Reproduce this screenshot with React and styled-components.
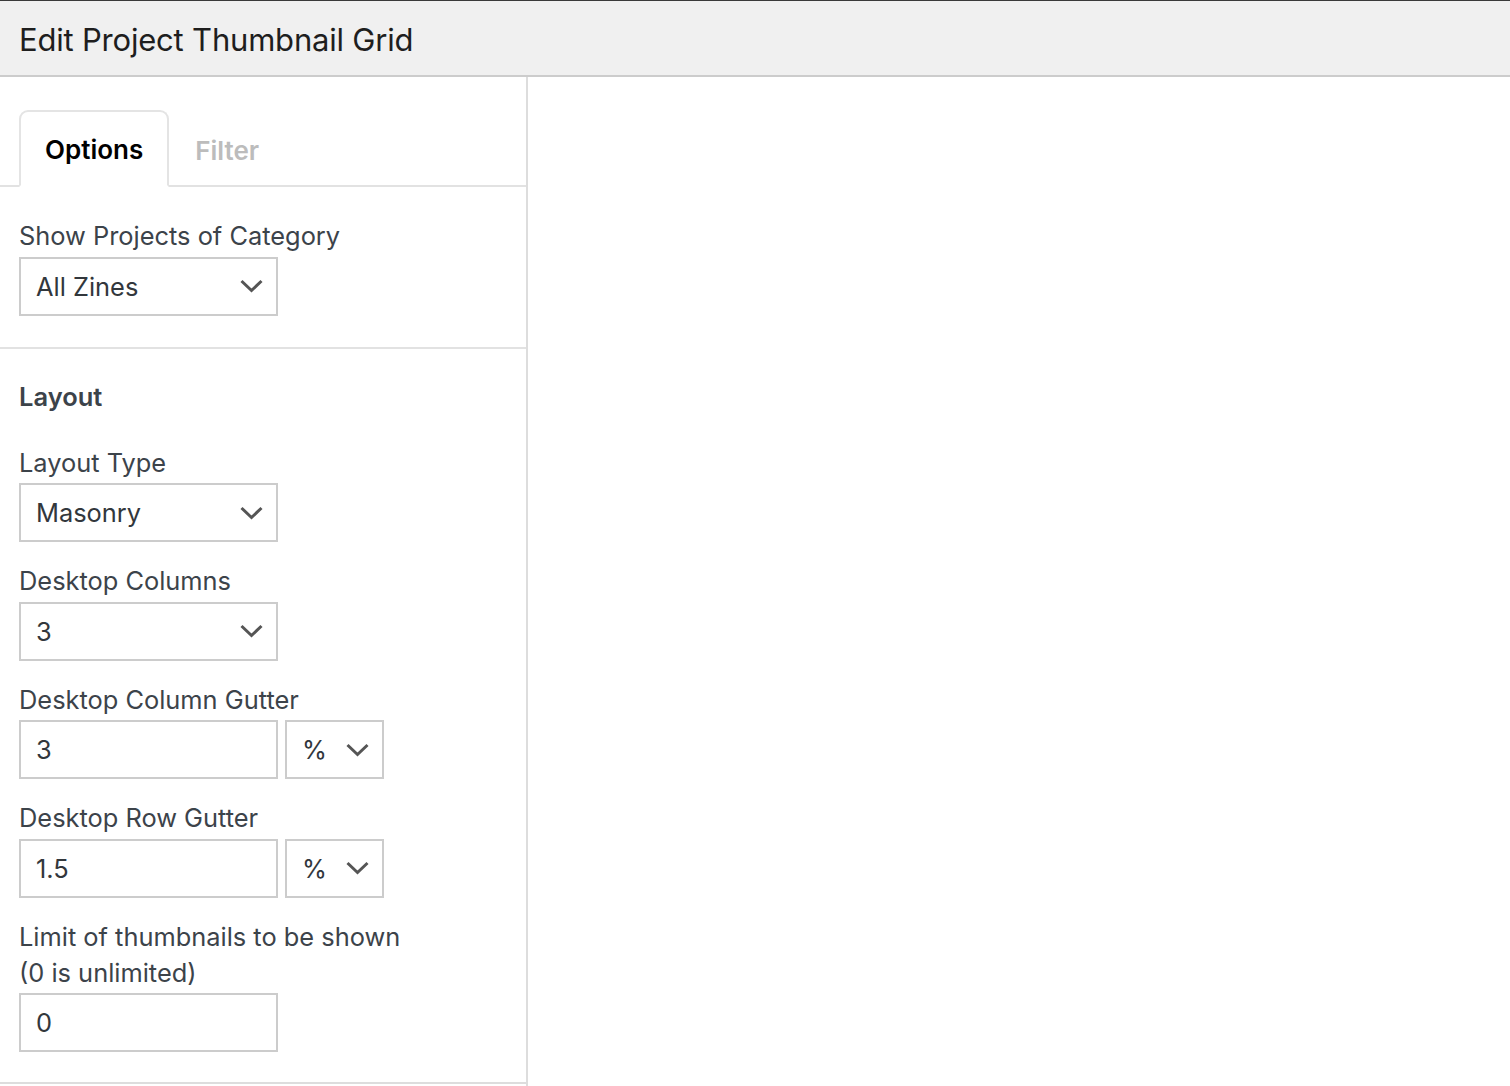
import React from "react";
import styled, { createGlobalStyle } from "styled-components";

const Global = createGlobalStyle`
  html, body { margin: 0; padding: 0; background: #fff; }
  body { font-family: Inter, "Noto Sans", sans-serif; -webkit-font-smoothing: antialiased; }
  * { box-sizing: border-box; }
`;

const Page = styled.div`
  width: 1510px;
  height: 1086px;
  display: flex;
  flex-direction: column;
  overflow: hidden;
`;

const Header = styled.header`
  height: 77px;
  flex: none;
  background: #f0f0f0;
  border-top: 1px solid #3a3a3a;
  border-bottom: 2px solid #cccccc;
  display: flex;
  align-items: center;
  padding: 2px 19px 0;
`;

const Title = styled.h1`
  margin: 0;
  font-size: 31px;
  font-weight: 400;
  color: #1e1e1e;
  letter-spacing: -0.2px;
`;

const Body = styled.div`
  flex: 1;
  display: flex;
  align-items: stretch;
`;

const Sidebar = styled.aside`
  width: 528px;
  flex: none;
  border-right: 2px solid #dddddd;
  background: #fff;
`;

const Tabs = styled.div`
  display: flex;
  padding: 33px 19px 0;
  border-bottom: 2px solid #e2e2e2;
`;

const Tab = styled.div`
  height: 77px;
  margin-bottom: -2px;
  padding: 2px 24px 0;
  display: flex;
  align-items: center;
  font-size: 26px;
  font-weight: 600;
  color: ${(p) => (p.$active ? "#000" : "#bcbcbc")};
  background: ${(p) => (p.$active ? "#fff" : "transparent")};
  border: ${(p) => (p.$active ? "2px solid #e4e4e4" : "2px solid transparent")};
  border-bottom: ${(p) => (p.$active ? "2px solid #fff" : "none")};
  border-radius: 9px 9px 0 0;
`;

const Section = styled.section`
  padding: ${(p) => p.$pad || "31px 19px 31px"};
  border-bottom: 2px solid ${(p) => (p.$last ? "#dddddd" : "#e2e2e2")};
  display: flex;
  flex-direction: column;
  gap: 21px;
`;

const Heading = styled.h2`
  margin: 0 0 9px;
  font-size: 25.5px;
  line-height: 36px;
  font-weight: 600;
  color: #3c434a;
`;

const Field = styled.div`
  display: flex;
  flex-direction: column;
  gap: 2.5px;
`;

const Label = styled.label`
  font-size: 25.4px;
  line-height: 36px;
  color: #3c434a;
  max-width: 410px;
`;

const Row = styled.div`
  display: flex;
  gap: 7px;
`;

const Box = styled.div`
  width: ${(p) => p.$w || 259}px;
  height: 59px;
  border: 2px solid #cccccc;
  background: #fff;
  display: flex;
  align-items: center;
  padding: 0 13px 0 15px;
  font-size: 25.4px;
  color: #32373c;
`;

const Value = styled.span`
  flex: 1;
`;

const Chevron = () => (
  <svg width="23" height="14" viewBox="0 0 23 14">
    <path d="M1.5 2 L11.5 11.5 L21.5 2" fill="none" stroke="#555" strokeWidth="3" />
  </svg>
);

const Select = ({ value, w }) => (
  <Box $w={w}>
    <Value>{value}</Value>
    <Chevron />
  </Box>
);

export default function App() {
  return (
    <Page>
      <Global />
      <Header>
        <Title>Edit Project Thumbnail Grid</Title>
      </Header>
      <Body>
        <Sidebar>
          <Tabs>
            <Tab $active>Options</Tab>
            <Tab>Filter</Tab>
          </Tabs>
          <Section>
            <Field>
              <Label>Show Projects of Category</Label>
              <Select value="All Zines" />
            </Field>
          </Section>
          <Section $pad="30px 19px 30px" $last>
            <Heading>Layout</Heading>
            <Field>
              <Label>Layout Type</Label>
              <Select value="Masonry" />
            </Field>
            <Field>
              <Label>Desktop Columns</Label>
              <Select value="3" />
            </Field>
            <Field>
              <Label>Desktop Column Gutter</Label>
              <Row>
                <Box>3</Box>
                <Select value="%" w={99} />
              </Row>
            </Field>
            <Field>
              <Label>Desktop Row Gutter</Label>
              <Row>
                <Box>1.5</Box>
                <Select value="%" w={99} />
              </Row>
            </Field>
            <Field>
              <Label>Limit of thumbnails to be shown (0 is unlimited)</Label>
              <Box>0</Box>
            </Field>
          </Section>
        </Sidebar>
      </Body>
    </Page>
  );
}
